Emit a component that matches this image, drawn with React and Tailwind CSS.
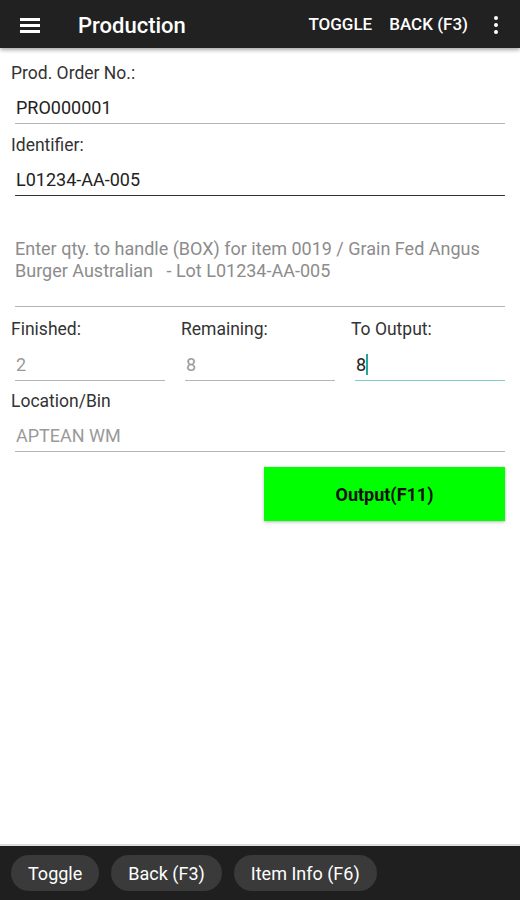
import { useState } from 'react';

const font = { fontFamily: 'Roboto, "Liberation Sans", sans-serif' };

const Field = ({ value, muted, line = 'border-[#b5b5b5]', className = '', caret }) => (
  <div className={`ml-1 mt-[8px] border-b ${line} ${className}`}>
    <div className={`h-[30px] pl-[1px] text-[18px] leading-[30px] ${muted ? 'text-[#9a9a9a]' : 'text-[#222]'}`}>
      {value}
      {caret && <span className="inline-block h-[21px] w-[2px] translate-y-[4px] bg-[#26a69a]" />}
    </div>
  </div>
);

const Label = ({ children, className = '' }) => (
  <div className={`h-[24px] text-[17.5px] leading-[24px] text-[#333] ${className}`}>{children}</div>
);

export default function App() {
  const [qty] = useState('8');

  return (
    <div className="flex h-[900px] w-[520px] flex-col bg-white" style={font}>
      <header className="z-10 flex h-[48px] shrink-0 items-center bg-[#212121] pl-[20px] pr-[22px] pt-[2px] text-white shadow-[0_2px_4px_rgba(0,0,0,0.35)]">
        <svg width="20" height="16" viewBox="0 0 20 16" className="shrink-0">
          <rect x="0" y="1" width="20" height="3" fill="#fff" />
          <rect x="0" y="7" width="20" height="3" fill="#fff" />
          <rect x="0" y="13" width="20" height="3" fill="#fff" />
        </svg>
        <h1 className="ml-[38px] text-[22px] font-medium">Production</h1>
        <div className="ml-auto flex items-center text-[17px] font-medium">
          <span>TOGGLE</span>
          <span className="ml-[17px]">BACK (F3)</span>
          <svg width="4" height="18" viewBox="0 0 4 18" className="ml-[26px]">
            <circle cx="2" cy="2" r="2" fill="#fff" />
            <circle cx="2" cy="9" r="2" fill="#fff" />
            <circle cx="2" cy="16" r="2" fill="#fff" />
          </svg>
        </div>
      </header>

      <main className="flex-1 pl-[11px] pr-[15px] pt-[13px]">
        <Label>Prod. Order No.:</Label>
        <Field value="PRO000001" />
        <Label className="mt-[9px]">Identifier:</Label>
        <Field value="L01234-AA-005" line="border-[#333]" />

        <div className="ml-1 mt-[42px] border-b border-[#b5b5b5] pb-[24px] text-[18px] leading-[22px] text-[#8c8c8c]">
          Enter qty. to handle (BOX) for item 0019 / Grain Fed Angus Burger Australian&nbsp;&nbsp; - Lot L01234-AA-005
        </div>

        <div className="mt-[10px] grid grid-cols-[154px_154px_154px] gap-x-[16px]">
          <div>
            <Label>Finished:</Label>
            <Field value="2" muted className="mt-[9px]" />
          </div>
          <div>
            <Label>Remaining:</Label>
            <Field value="8" muted className="mt-[9px]" />
          </div>
          <div>
            <Label>To Output:</Label>
            <Field value={qty} caret line="border-[#7fcfc4]" className="mt-[9px]" />
          </div>
        </div>

        <Label className="mt-[8px]">Location/Bin</Label>
        <Field value="APTEAN WM" muted />

        <div className="mt-[15px] flex justify-end">
          <button className="h-[54px] w-[241px] bg-[#00ff00] text-[18px] font-bold text-[#111] shadow-[0_1px_3px_rgba(0,0,0,0.3)]">
            Output(F11)
          </button>
        </div>
      </main>

      <footer className="flex h-[56px] shrink-0 items-center gap-[12px] border-t-2 border-[#ddd] bg-[#1f1f1f] px-[11px]">
        {['Toggle', 'Back (F3)', 'Item Info (F6)'].map((t) => (
          <button key={t} className="h-[36px] rounded-full bg-[#3a3a3a] px-[17px] text-[18px] text-white">
            {t}
          </button>
        ))}
      </footer>
    </div>
  );
}
